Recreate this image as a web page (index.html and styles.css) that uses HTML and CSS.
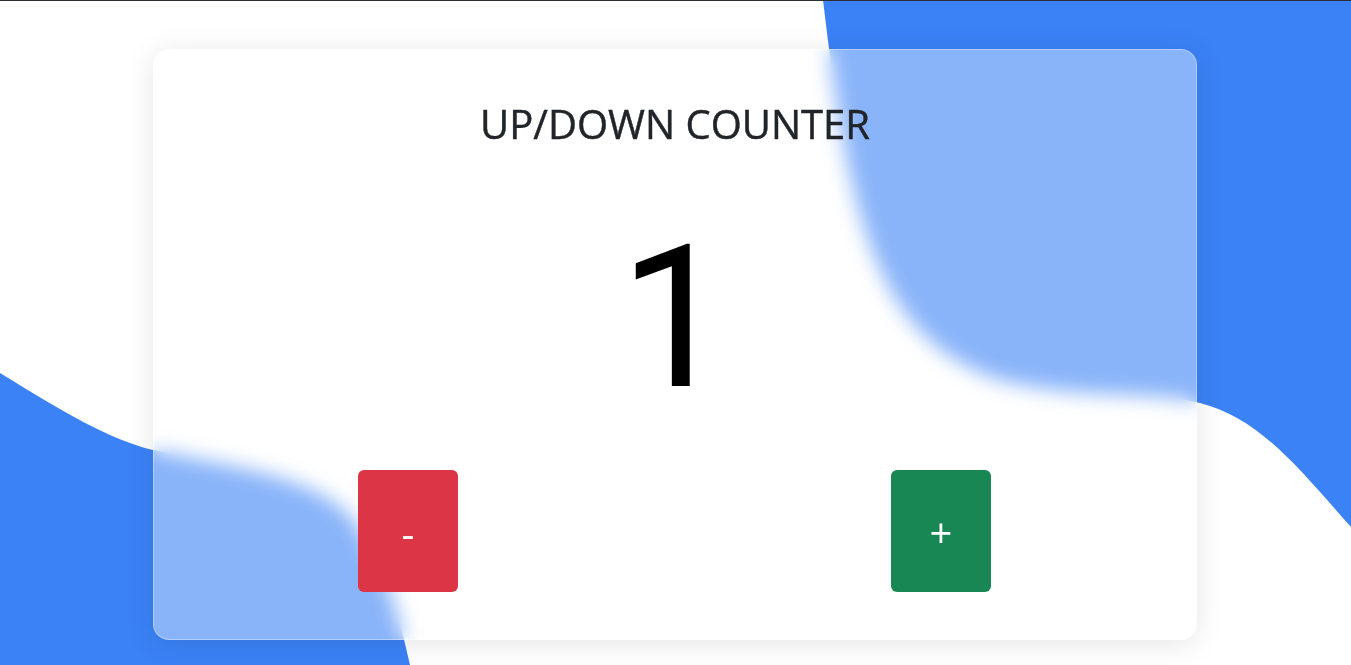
FILE: index.html
```html
<!DOCTYPE html>
<html lang="en">
<head>
<meta charset="utf-8">
<title>Up/Down Counter</title>
<link rel="stylesheet" href="styles.css">
</head>
<body>
<svg class="blobs" viewBox="0 0 1351 665" preserveAspectRatio="none" aria-hidden="true">
  <path d="M823,0 C850,230 880,340 1000,380 C1080,400 1150,390 1200,403 C1260,418 1300,470 1351,527 L1351,0 Z" fill="#3b82f6"/>
  <path d="M0,373 C60,410 110,440 153,450 C250,470 330,480 360,530 C390,580 400,620 410,665 L0,665 Z" fill="#3b82f6"/>
</svg>
<main class="page">
  <section class="card">
    <h1 class="title">UP/DOWN COUNTER</h1>
    <div class="count">1</div>
    <div class="controls">
      <button class="btn btn-minus" type="button">-</button>
      <button class="btn btn-plus" type="button">+</button>
    </div>
  </section>
</main>
</body>
</html>
```
FILE: styles.css
```css
html, body {
  margin: 0;
  padding: 0;
}
html {
  background: #ffffff;
}
body {
  border-top: 1px solid #2b2e35;
  background: transparent;
  font-family: "Open Sans", "Noto Sans", sans-serif;
  color: #212529;
  min-height: 664px;
  overflow: hidden;
}
.blobs {
  position: fixed;
  top: 0;
  left: 0;
  width: 100%;
  height: 100%;
  z-index: -1;
}
.page {
  padding: 48px 1px 0 0;
}
.card {
  box-sizing: border-box;
  width: 1044px;
  margin: 0 auto;
  padding: 50px 0 47px;
  background: rgba(255, 255, 255, 0.4);
  border: 1px solid rgba(255, 255, 255, 0.35);
  border-radius: 16px;
  box-shadow: 0 4px 30px rgba(0, 0, 0, 0.1);
  backdrop-filter: blur(10px);
  -webkit-backdrop-filter: blur(10px);
  display: flex;
  flex-direction: column;
}
.title {
  margin: 0;
  text-align: center;
  font-size: 40px;
  font-weight: 400;
  line-height: 48px;
  color: #212529;
  -webkit-text-stroke: 0.45px #212529;
}
.count {
  margin-top: 70px;
  height: 200px;
  text-align: center;
  font-family: Roboto, "Noto Sans", sans-serif;
  font-size: 198px;
  line-height: 200px;
  color: #000000;
}
.controls {
  margin-top: 52px;
  padding: 0 205px 0 204px;
  display: flex;
  justify-content: space-between;
}
.btn {
  box-sizing: border-box;
  width: 100px;
  height: 122px;
  border: none;
  border-radius: 6px;
  color: #ffffff;
  font-family: "Open Sans", "Noto Sans", sans-serif;
  font-size: 40px;
  line-height: 1;
  padding: 4px 0 0;
  display: flex;
  align-items: center;
  justify-content: center;
}
.btn-minus {
  background: #dc3545;
}
.btn-plus {
  background: #198754;
}
```
